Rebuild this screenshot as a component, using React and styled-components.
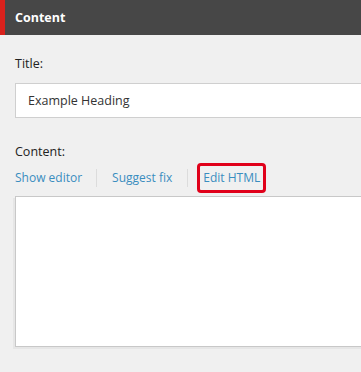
import React from 'react'
import styled, { createGlobalStyle } from 'styled-components'

const GlobalStyle = createGlobalStyle`
  html, body {
    margin: 0;
    padding: 0;
    background: #f0f0f0;
  }
  body {
    font-family: "Open Sans", "Noto Sans", sans-serif;
    font-size: 12px;
    color: #333;
    overflow: hidden;
  }
`

const Panel = styled.div`
  width: 361px;
  height: 372px;
  background: #f0f0f0;
  overflow: hidden;
`

const Header = styled.div`
  height: 35px;
  display: flex;
  align-items: center;
  background: #474747;
  border-left: 5px solid #d9211c;
  padding-left: 10px;
  color: #fff;
  font-weight: 700;
  font-size: 12.5px;
`

const Body = styled.div`
  padding: 20px 0 0 15px;
`

const Label = styled.div`
  line-height: 18px;
  font-size: 12.5px;
  color: #222;
  margin-bottom: ${p => p.$gap ?? 10}px;
`

const TextInput = styled.div`
  box-sizing: border-box;
  height: 35px;
  width: 380px;
  display: flex;
  align-items: center;
  padding-left: 12px;
  background: #fff;
  border: 1px solid #cfcfcf;
  color: #333;
  font-size: 12.5px;
  margin-bottom: 25px;
`

const LinkRow = styled.div`
  display: flex;
  align-items: center;
  height: 30px;
  margin: 2px 0 3px;
`

const LinkItem = styled.a`
  position: relative;
  color: #3a8dbf;
  text-decoration: none;
  padding: 0 15px 0 15px;
  line-height: 18px;
  border-left: 1px solid #dcdcdc;

  &:first-child {
    padding-left: 0;
    border-left: none;
    padding-right: 14px;
  }

  ${p => p.$marked && `
    &::after {
      content: "";
      position: absolute;
      left: 9px;
      right: 9px;
      top: -6px;
      bottom: -6px;
      border: 3px solid #e0001a;
      border-radius: 4px;
    }
  `}
`

const Editor = styled.div`
  box-sizing: border-box;
  height: 151px;
  width: 380px;
  background: #fff;
  border: 1px solid #c8c8c8;
  box-shadow: -2px 2px 0 #e6e6e6;
`

export default function App() {
  return (
    <Panel>
      <GlobalStyle />
      <Header>Content</Header>
      <Body>
        <Label>Title:</Label>
        <TextInput>Example Heading</TextInput>
        <Label $gap={0}>Content:</Label>
        <LinkRow>
          <LinkItem>Show editor</LinkItem>
          <LinkItem>Suggest fix</LinkItem>
          <LinkItem $marked>Edit HTML</LinkItem>
        </LinkRow>
        <Editor />
      </Body>
    </Panel>
  )
}
